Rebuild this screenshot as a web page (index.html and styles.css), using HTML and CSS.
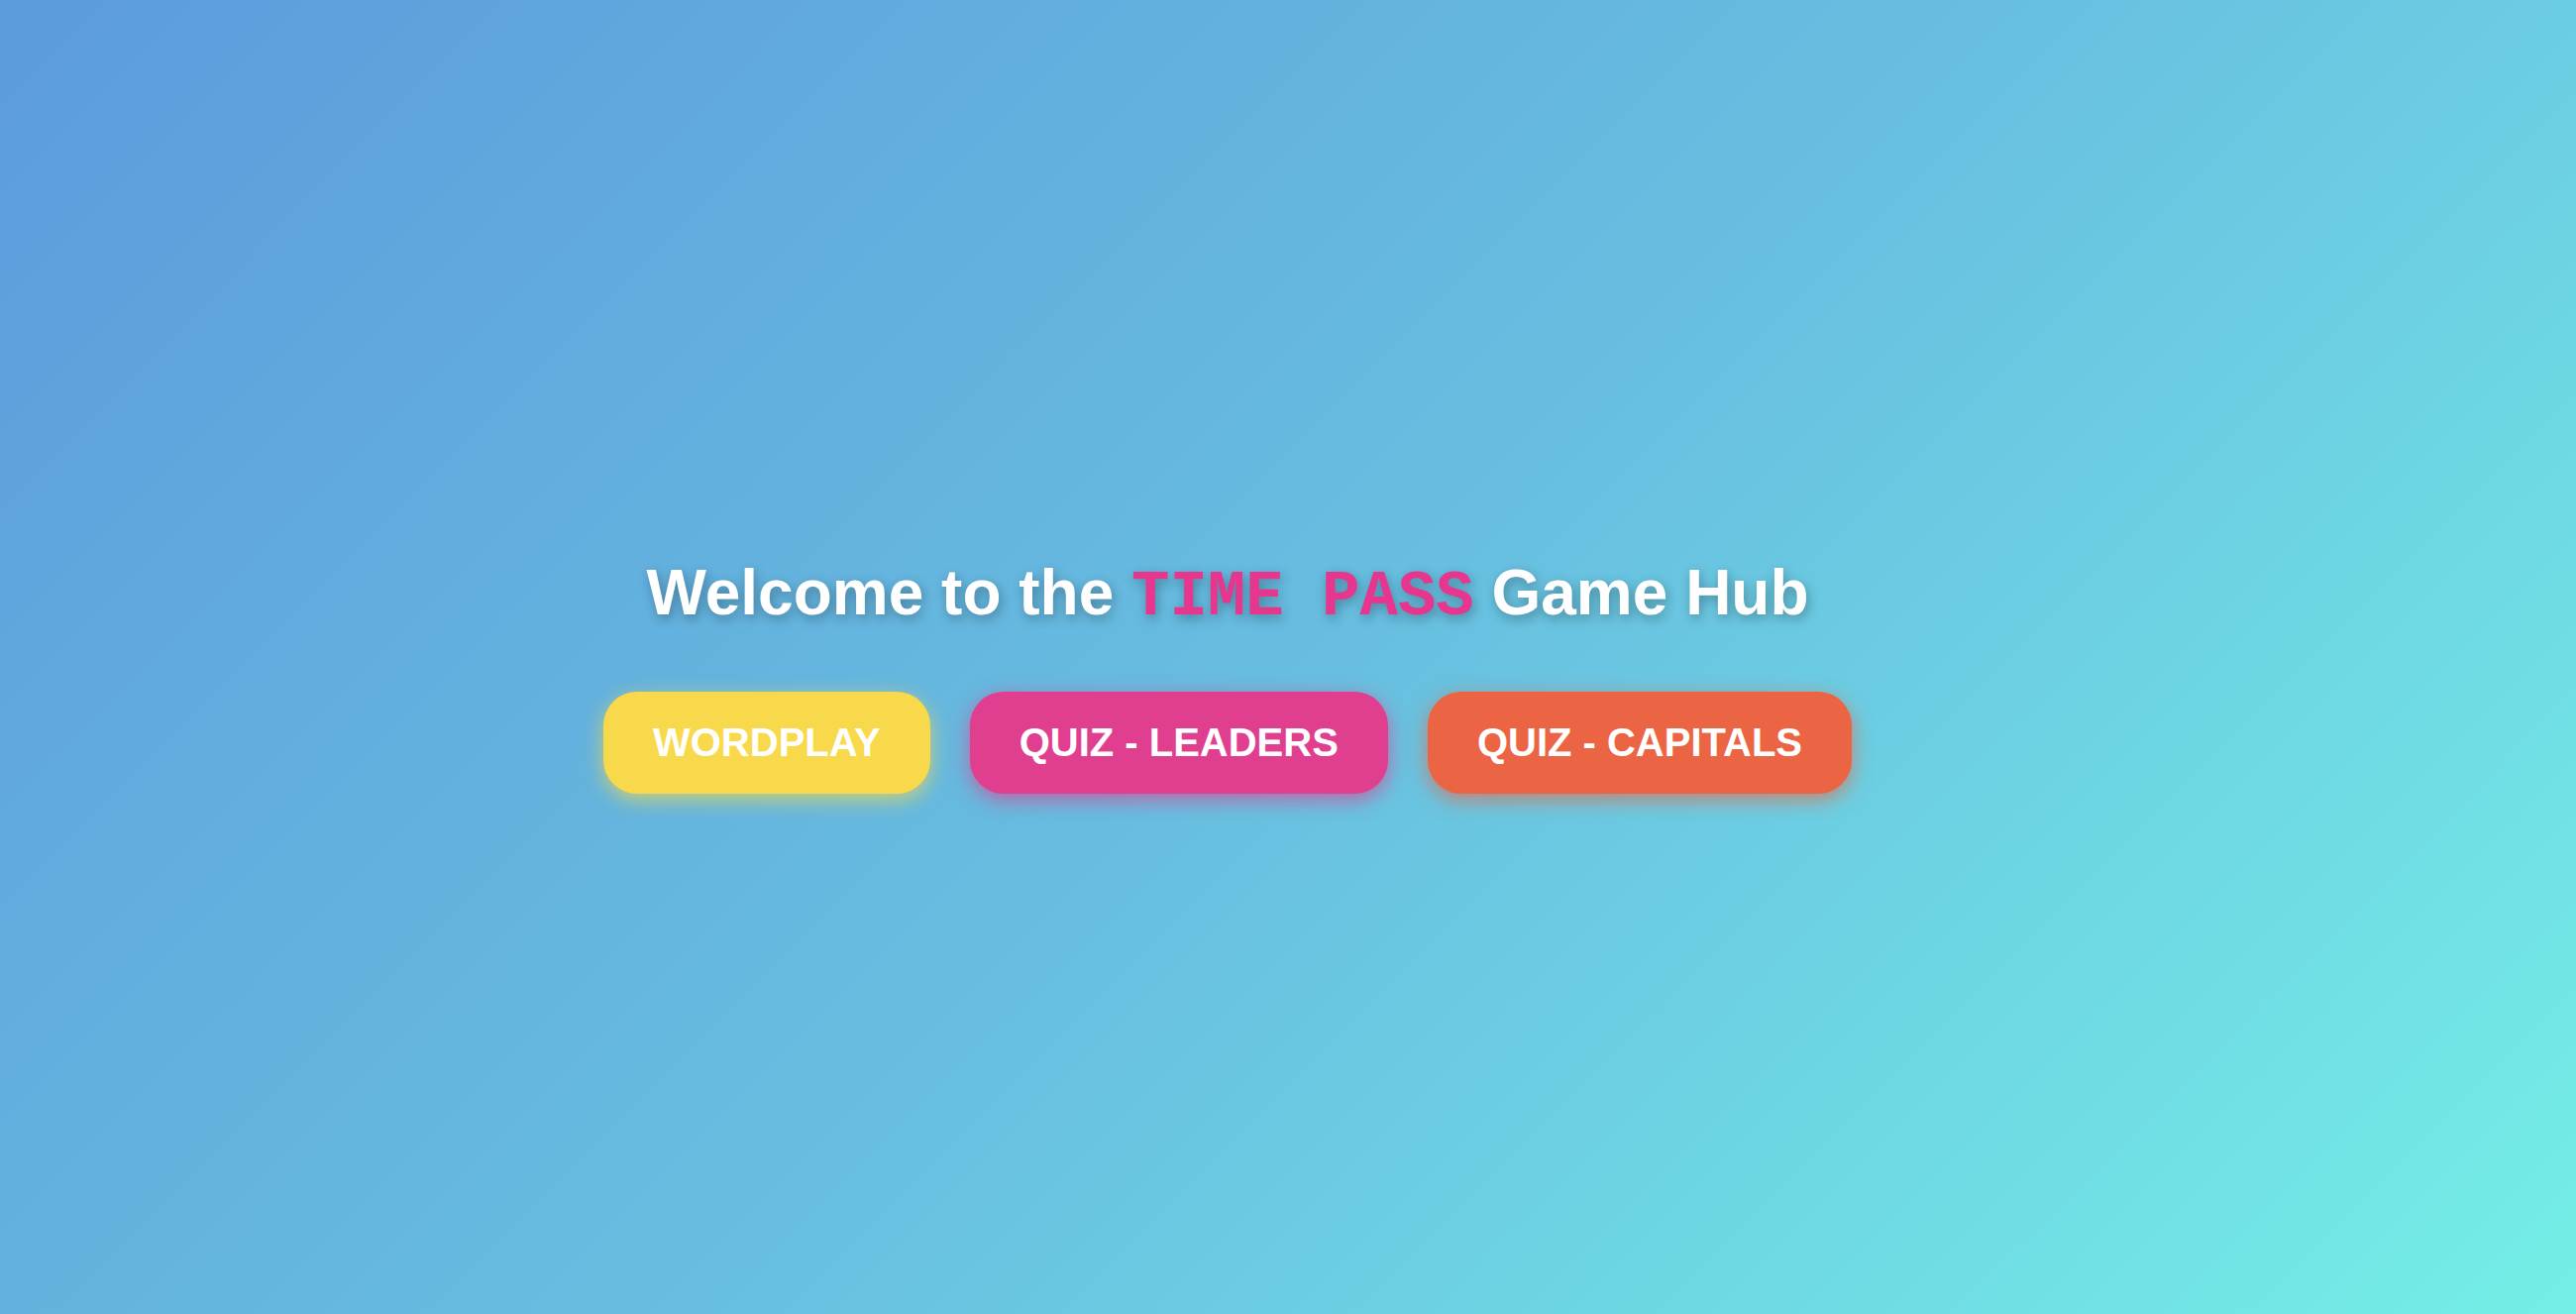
FILE: index.html
```html
<!DOCTYPE html>
<html lang="en">
<head>
<meta charset="utf-8">
<title>Time Pass Game Hub</title>
<link rel="stylesheet" href="styles.css">
</head>
<body>
<main class="hub">
  <h1 class="title">Welcome to the <span class="brand">TIME PASS</span> Game Hub</h1>
  <nav class="games">
    <a class="game game-word" href="#">WORDPLAY</a>
    <a class="game game-leaders" href="#">QUIZ - LEADERS</a>
    <a class="game game-capitals" href="#">QUIZ - CAPITALS</a>
  </nav>
</main>
</body>
</html>
```
FILE: styles.css
```css
html, body {
  margin: 0;
  padding: 0;
  height: 100%;
}
body {
  background: linear-gradient(135deg, #5c9bdc 0%, #67bde0 50%, #74eee6 100%);
  font-family: "Liberation Sans", Arial, sans-serif;
  color: #fff;
}
.hub {
  box-sizing: border-box;
  height: 100%;
  padding-right: 122px;
  display: flex;
  flex-direction: column;
  align-items: center;
  justify-content: center;
}
.title {
  font-size: 64px;
  font-weight: bold;
  margin: 35px 0 45px;
  text-shadow: 2px 4px 12px rgba(0, 0, 0, 0.3);
}
.brand {
  font-family: "Liberation Mono", "Courier New", monospace;
  color: #e6368e;
}
.games {
  display: flex;
  gap: 40px;
  margin-top: 14px;
}
.game {
  display: block;
  text-decoration: none;
  color: #fff;
  font-size: 40px;
  font-weight: bold;
  padding: 29px 50px;
  border-radius: 34px;
}
.game-word {
  background: #f8d94b;
  box-shadow: 0 6px 20px rgba(248, 217, 75, 0.7);
}
.game-leaders {
  background: #e03e8e;
  box-shadow: 0 6px 20px rgba(224, 62, 142, 0.7);
}
.game-capitals {
  background: #eb6443;
  box-shadow: 0 6px 20px rgba(235, 100, 67, 0.7);
}
```
